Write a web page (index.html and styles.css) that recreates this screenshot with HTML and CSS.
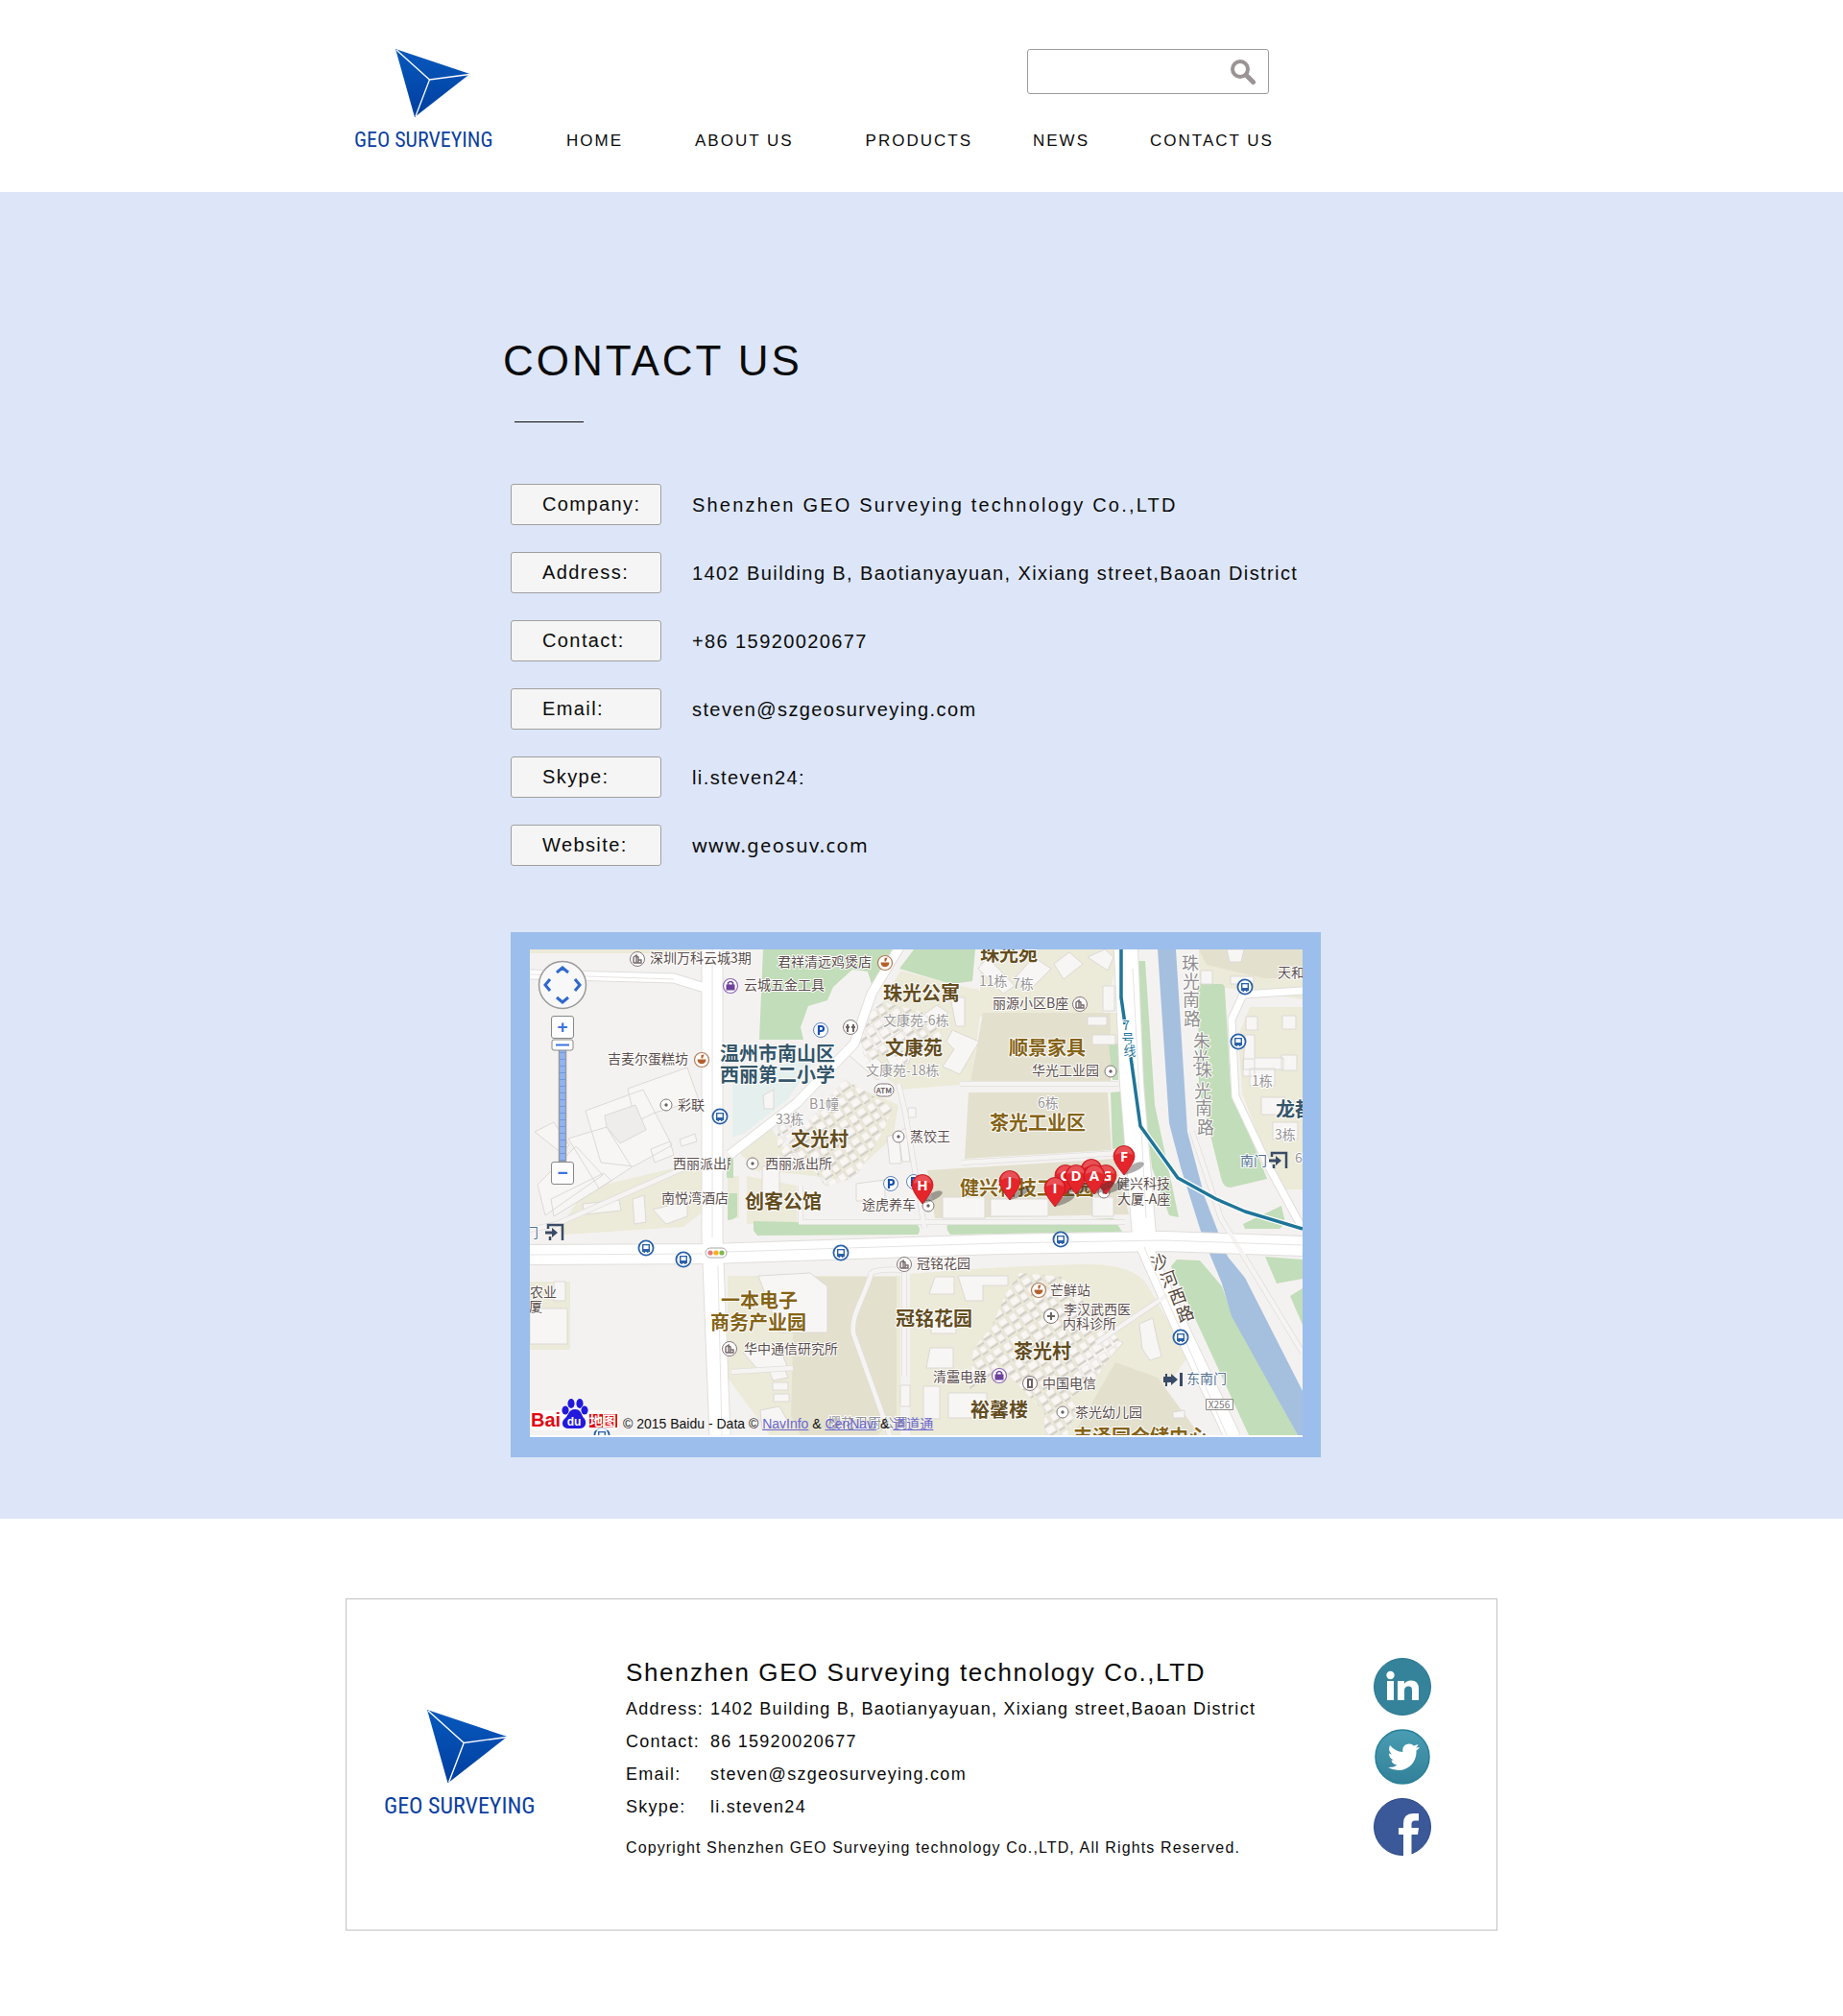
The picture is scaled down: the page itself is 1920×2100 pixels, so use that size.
FILE: index.html
```html
<!DOCTYPE html>
<html lang="en">
<head>
<meta charset="utf-8">
<meta name="viewport" content="width=device-width, initial-scale=1">
<title>Contact Us - GEO Surveying</title>
<link rel="stylesheet" href="styles.css">
</head>
<body>
<header class="site-header">
  <div class="container header-inner">
    <a class="brand" href="#">
      <svg class="brand-mark" viewBox="0 0 78 71" aria-hidden="true">
        <defs><linearGradient id="blue" x1="0" y1="0" x2="0" y2="1"><stop offset="0" stop-color="#0858bd"/><stop offset="1" stop-color="#003f9f"/></linearGradient></defs>
        <path fill="url(#blue)" d="M0 0 77.500 26 20 71z"/>
        <path fill="none" stroke="#fff" stroke-width="1.300" d="M1 1 35.500 32 77 26.500M35.500 32 21 70"/>
      </svg>
      <span class="brand-name">GEO SURVEYING</span>
    </a>
    <div class="header-main">
      <form class="search" role="search">
        <input class="search-input" type="search" aria-label="Search">
        <button class="search-button" type="button" aria-label="Search">
          <svg viewBox="0 0 28 28" width="28" height="28" aria-hidden="true"><circle cx="11" cy="11" r="8" fill="none" stroke="#9b9495" stroke-width="4"/><path d="m17.500 17.500 7 7" stroke="#9b9495" stroke-width="5" stroke-linecap="round"/></svg>
        </button>
      </form>
      <nav aria-label="Main">
        <ul class="nav-list">
          <li><a href="#">HOME</a></li>
          <li><a href="#">ABOUT US</a></li>
          <li><a href="#">PRODUCTS</a></li>
          <li><a href="#">NEWS</a></li>
          <li><a href="#">CONTACT US</a></li>
        </ul>
      </nav>
    </div>
  </div>
</header>

<main class="contact">
  <div class="container contact-inner">
    <h1 class="title">CONTACT US</h1>
    <hr class="rule">
    <dl class="details">
      <div class="row"><dt>Company:</dt><dd class="wide">Shenzhen GEO Surveying technology Co.,LTD</dd></div>
      <div class="row"><dt>Address:</dt><dd>1402 Building B, Baotianyayuan, Xixiang street,Baoan District</dd></div>
      <div class="row"><dt>Contact:</dt><dd>+86 15920020677</dd></div>
      <div class="row"><dt>Email:</dt><dd><a href="#">steven@szgeosurveying.com</a></dd></div>
      <div class="row"><dt>Skype:</dt><dd>li.steven24:</dd></div>
      <div class="row"><dt>Website:</dt><dd class="site"><a href="#">www.geosuv.com</a></dd></div>
    </dl>

    <div class="map-frame">
      <div class="map">
        <svg class="map-canvas" viewBox="0 0 805 508" role="img" aria-label="Map of the office area">
          <defs>
            <symbol id="bus" viewBox="0 0 18 18"><circle cx="9" cy="9" r="7.600" fill="#fff" stroke="#2c61a8" stroke-width="1.800"/><path fill="#2c61a8" d="M5 5h8v8h-1.500v1H10v-1H8v1H6.500v-1H5z"/><path fill="#fff" d="M6.400 6.300h5.200V10H6.400z"/></symbol>
            <symbol id="dot" viewBox="0 0 18 18"><circle cx="9" cy="9" r="6" fill="#fff" stroke="#82777a"/><circle cx="9" cy="9" r="1.700" fill="#6d6262"/></symbol>
            <symbol id="food" viewBox="0 0 18 18"><circle cx="9" cy="9" r="7.500" fill="#fff" stroke="#b07b58" stroke-width="1.200"/><path fill="#b3612c" d="M4.500 8.500h9c0 3-2 4.800-4.500 4.800S4.500 11.500 4.500 8.500zM8.500 4l3-.5-1.500 4H8.500z"/></symbol>
            <symbol id="shop" viewBox="0 0 18 18"><circle cx="9" cy="9" r="7.500" fill="#fff" stroke="#8c68b5" stroke-width="1.200"/><path fill="#6d419c" d="M4.500 7.500h9v6h-9z"/><path fill="none" stroke="#6d419c" stroke-width="1.500" d="M6.500 8V5.800q2.500-2.600 5 0V8"/></symbol>
            <symbol id="tower" viewBox="0 0 18 18"><circle cx="9" cy="9" r="7.500" fill="#fff" stroke="#85777a"/><path fill="none" stroke="#75686a" stroke-width="1.400" d="M5 13V7l3-2v8m0-7 2 1v6m-5 0h8v-3h-3"/></symbol>
            <symbol id="park" viewBox="0 0 18 18"><circle cx="9" cy="9" r="7.500" fill="#fff" stroke="#5c83bb"/><path fill="none" stroke="#174fae" stroke-width="2.200" d="M7 14V5h2.500a2.400 2.400 0 0 1 0 5H7"/></symbol>
            <symbol id="pin" viewBox="0 0 36 36"><path fill="#333" opacity=".4" d="m12 32 9-11q9-5 12-1-2 7-21 12z"/><path fill="#e4252b" stroke="#bd1217" stroke-width=".8" d="M12 32Q1 19 1 12.500a11 11 0 0 1 22 0Q23 19 12 32z"/><path fill="#fff" opacity=".2" d="M3 11a9 9 0 0 1 18 0q-9-5-18 0z"/></symbol>
            <symbol id="gate" viewBox="0 0 20 20"><path fill="none" stroke="#394b66" stroke-width="2.500" d="M3 6V2h15v16M5 14v4"/><path fill="#394b66" d="M0 8.500h7V5l6 5-6 5v-3.500H0z"/></symbol>
            <pattern id="village" width="22" height="22" patternUnits="userSpaceOnUse" patternTransform="rotate(-34)"><path fill="#d2cec7" d="M1 3h8v8H1zm10-1h9v7h-9zM1 14h7v7H1zm10-3h10v9H11z"/><path fill="#f9f6f3" stroke="#d5d1cb" stroke-width=".6" d="M1 1h8v8H1zm10-1h9v7h-9zM1 12h7v7H1zm10-2h10v8H11z"/></pattern>
            <clipPath id="cut"><path d="M140 210h69v30h-69z"/></clipPath>
            <clipPath id="sheet"><path d="M0 0h805v506H0z"/></clipPath>
          </defs>
          <path fill="#fff" d="M0 0h805v508H0z"/>
          <g clip-path="url(#sheet)">
          <path fill="#f4f2f0" d="M0 0h805v508H0z"/>

          <!-- land use -->
          <g fill="#ecead8">
            <path d="M0 0h180v4H0zM30 292l28-42 124-30v52l-22 17-125 8zM0 346h42v71H0zM386 22l52 14 30 6 2 18-10 80-74 6-48-40zM262 215l70-75 52 22-6 34-48 44-70-8zM470 0h146l-20 70H468zM603 66h12v35h-12z"/>
            <path d="M697 0h108v52l-80-12-28-4zM750 60h55v190h-25l-38-100-4-60zM396 338q90-8 180-10 60-2 72 30l38 66-60 82H396zM206 340h180v166H250l-44-60zM226 236l52 10v40h-52zM206 236h12v44h-12zM212 205l40-18 16 25-30 20z"/>
          </g>
          <g fill="#e3e0ce">
            <path d="M472 66h133v73H459zM457 149h145l4 60-153 9zM414 230l196-12 14 58-202 4zM276 341h106v143l-20 22h-80l-10-20zM610 430l44 16 44 60H566zM697 0h108v30h-40l-60-14z"/>
          </g>
          <path fill="#e5f0ee" d="m211 136 90-28-32 48-46 36-12 4z"/>
          <g fill="#c2ddb9">
            <path d="M243 0h137l-22 43-6-20-16-2-20 18-6 14-20 6-8 22 3 13h-46zM400 0h64l-3 33-22 3-54-16zM233 283l171 4q4 5 0 10l-167 1-4-5zM435 287l173-7 9 14-179 3q-5-5-3-10zM205 216h7v22h-7zM206 254h10v24q-4 4-10 4zM603 98h10v38h-6zM605 149l11-1 4 58-13 2z"/>
            <path d="M629 12h12l10 150 25 117-10-2-18-50-8-70zM696 40q0-4 4-4h20q4 0 4 5l6 102 38 96-38 9q-8 0-10-10L697 145zM668 330l6-7 24 1 23 27 10 28 69 127h-51zM743 286l40-19 4 18-6 6h-36zM766 320l39 3v20l-27 5zM792 361l13-8v38z"/>
          </g>
          <path fill="#a5bfdf" d="M654 0h19l12 190 18 68 24 62 18 22 60 118v46h-5l-69-124-10-34-20-48-23-73-12-46z"/>

          <!-- buildings -->
          <g fill="#f8f6f4" stroke="#dcd9d5">
            <path d="m102 145 62-22 12 34-46 13-20 10zM58 168l60-22 30 58-40 22-34-4zM40 197l40-12 26 42-34 22zM8 245l40-40 28 30-60 42zM5 190l20-10 16 24-8 8zM22 260l55-27 8 8-60 37zM126 208l20-8 4 14-20 8zM156 198l16-6 2 8-16 5zM55 265l38-4 2 11-38 4zM107 260l12-4 2 28-12 2zM128 271l36-9v16l-22 8zM25 346h12v20H25zM0 374h39v37H0z"/>
            <path fill="#efedeb" d="m78 173 32-11 11 26-27 14-14-17z"/>
            <path d="m365 100 24-16 14 12-8 22-18 6zM440 84l28 12-20 34-18-8 12-18-8-8zM345 84l22-14 20 16-28 22zM410 68l14-10 12 8-12 10zM438 50h15v30h-9zM243 152l11-6v20h-10zM242 226h18v40h-18zM340 244l30-4v22h-30zM265 214l16-4v10h-16zM372 195l12-4 3 32h-12zM384 190l8-4 4 35h-8zM394 165h8v10h-8zM330 108l14-12 30 30-12 10zM581 70h20v9h-20zM586 89h24v10h-24z"/>
            <path d="M430 258h44v22h-44zM480 260h60v18h-60zM586 258h22v20h-22zM422 341h20v18h-26zM446 340h52v10h-26v16h-18zM418 386h26v14h-26zM417 415h24v21h-28zM410 455h17v34h-17zM436 462h40v26h-40zM386 454h10v22h-10zM238 340l54-3 18 14v48h-50zM222 420l38-6 8 20-30 4zM250 440l15-4 4 10-16 3zM253 451h16v8h-16zM254 463h16v8h-16zM240 480l20-4 10 18-28 6zM635 390l14-6 4 20 5 20-12 4-8-12zM570 426l30-26 18 10-28 30-18 8zM670 482l12-2v8h-12z"/>
            <path d="M746 70h12v14h-12zm38-1h14v14h-14zM743 114h12v18h-12zM783 110h16v16h-16zM745 89h10v24h30v12h-42zM750 124h26v18h-26zM762 154h24v18h-24zM774 180h26v18h-26zM699 22h12v14h-12zM726 0h18l-3 13h-12zM730 28h24v8h-24zM581 8l18-8 9 8-6 14zM597 38h12v26h-12zM467 20l26 26 12-8-28-30zM505 30l20-22 18 12-18 18zM546 15l16-12 14 12-20 16z"/>
          </g>
          <path fill="url(#village)" d="m258 215 70-80 50 30-10 24-28 48-32 10-14-20-30 2zM340 75l28-20 40 10 22 24-40 30-18-10-22 10zM258 180l20-12 4 16-24 24zM480 395l16-36 14-22 44 4 62 68-24 34-50 45-48-50-36 22 4-44zM536 478l20-20 14 20-10 28h-24z"/>

          <!-- roads -->
          <g fill="none" stroke="#e0dedb" stroke-linejoin="round">
            <path stroke-width="11" d="m0 26 150 4 32 10"/><path stroke-width="11" d="m386-4-30 50-18 52-60 62-70 54"/><path stroke-width="23" d="M190 0v300l8 206"/><path stroke-width="22" d="m0 318 190-1 300-10 170-3 145 5"/><path stroke-width="26" d="m621 0 6 140 14 170"/><path stroke-width="18" d="m636 300 40 90 56 118"/><path stroke-width="9" d="m805 43-62 4-12 26 4 80 34 72 36 66"/><path stroke-width="6" d="m0 292 28-6 150-66M384 140l7 30 16 95 4 25M280 284h340M282 246v38M393 334q-40-2-38 6c-10 30-20 40-18 60l38 106M390 335v110M448 140h165M450 222l165-10M590 410l44-30 30-20M210 440l64-4M690 190l30 90 85 140"/>
          </g>
          <g fill="none" stroke="#fff" stroke-linejoin="round">
            <path stroke-width="9" d="m0 26 150 4 32 10"/><path stroke-width="9" d="m386-4-30 50-18 52-60 62-70 54"/><path stroke-width="21" d="M190 0v300l8 206"/><path stroke-width="20" d="m0 318 190-1 300-10 170-3 145 5"/><path stroke-width="24" d="m621 0 6 140 14 170"/><path stroke-width="16" d="m636 300 40 90 56 118"/><path stroke-width="7" d="m805 43-62 4-12 26 4 80 34 72 36 66"/>
            <path stroke="#f6f4f3" stroke-width="4.500" d="m0 292 28-6 150-66M384 140l7 30 16 95 4 25M280 284h340M282 246v38M393 334q-40-2-38 6c-10 30-20 40-18 60l38 106M390 335v110M448 140h165M450 222l165-10M590 410l44-30 30-20M210 440l64-4M690 190l30 90 85 140"/>
            <path stroke="#e6e4e2" d="m0 318 180-1m25-2 285-9 170-3 145 5M190 0v300m6 30 4 176M0 26l150 5M628 20l14 260m-2 30 86 196"/>
            <path stroke="#fff" stroke-width="6" d="M616 0v50l4 28m6 34 10 72 39 54 40 22 30 13 60 18"/>
            <path stroke="#1f7598" stroke-width="3.500" d="M616 0v50l4 28m6 34 10 72 39 54 40 22 30 13 60 18"/>
          </g>

          <!-- places -->
          <g class="poi">
            <text x="125" y="14">深圳万科云城3期</text><text x="223" y="42">云城五金工具</text><text x="81" y="119">吉麦尔蛋糕坊</text><text x="154" y="167">彩联</text><text x="149" y="228" clip-path="url(#cut)">西丽派出所</text><text x="245" y="228">西丽派出所</text><text x="137" y="264">南悦湾酒店</text><text x="258" y="18">君祥清远鸡煲店</text><text x="396" y="200">蒸饺王</text><text x="482" y="61">丽源小区B座</text><text x="523" y="131">华光工业园</text><text x="346" y="271">途虎养车</text><text x="403" y="332">冠铭花园</text><text x="223" y="421">华中通信研究所</text><text x="420" y="450">清靁电器</text><text x="542" y="360">芒鲜站</text><text x="556" y="380">李汉武西医</text><text x="555" y="395">内科诊所</text><text x="534" y="457">中国电信</text><text x="568" y="487">茶光幼儿园</text><text x="779" y="29">天和</text><text x="611" y="249">健兴科技</text><text x="612" y="265">大厦-A座</text><text x="0" y="362">农业</text><text x="-1" y="377">厦</text>
          </g>
          <g class="block">
            <text x="368" y="79">文康苑-6栋</text><text x="350" y="131">文康苑-18栋</text><text x="291" y="166">B1幢</text><text x="256" y="182">33栋</text><text x="468" y="38">11栋</text><text x="503" y="41">7栋</text><text x="529" y="165">6栋</text><text x="752" y="142">1栋</text><text x="776" y="198">3栋</text><text x="797" y="222">63</text><text x="310" y="498">樱花卫厨公司</text>
          </g>
          <g class="gate"><text x="740" y="225">南门</text><text x="684" y="452">东南门</text><text x="-5" y="300">门</text></g>
          <g class="area">
            <text x="368" y="53">珠光公寓</text><text x="370" y="110">文康苑</text><text x="272" y="205">文光村</text><text x="224" y="270">创客公馆</text><text x="469" y="12">珠光苑</text><text x="381" y="392">冠铭花园</text><text x="504" y="426">茶光村</text><text x="459" y="487">裕馨楼</text>
          </g>
          <g class="area estate"><text x="499" y="110">顺景家具</text><text x="479" y="188">茶光工业区</text><text x="448" y="256">健兴科技工业园</text><text x="199" y="373">一本电子</text><text x="188" y="396">商务产业园</text><text x="566" y="515">丰泽园仓储中心</text></g>
          <g class="area school"><text x="198" y="116">温州市南山区</text><text x="198" y="138">西丽第二小学</text><text x="777" y="174">龙都</text></g>
          <g class="street">
            <text x="688" y="21">珠</text><text x="689" y="40">光</text><text x="689" y="59">南</text><text x="690" y="79">路</text><text x="700" y="102">朱</text><text x="699" y="120">光</text><text x="702" y="132">珠</text><text x="701" y="154">光</text><text x="702" y="172">南</text><text x="704" y="192">路</text>
          </g>
          <g class="street avenue">
            <text x="656" y="332" transform="rotate(-20 656 326)">沙</text><text x="666" y="350" transform="rotate(-20 666 344)">河</text><text x="675" y="368" transform="rotate(-20 675 362)">西</text><text x="683" y="386" transform="rotate(-20 683 380)">路</text>
          </g>
          <g class="metro"><text x="621" y="84">7</text><text x="623" y="97">号</text><text x="625" y="110">线</text></g>
          <path fill="#fff" stroke="#8d8888" d="M704.500 468.500h28v11h-28z"/><text class="route" x="718" y="478">X256</text>

          <!-- markers -->
          <g>
            <use href="#tower" x="103" y="1" width="18" height="18"/><use href="#shop" x="200" y="29" width="18" height="18"/><use href="#food" x="170" y="106" width="18" height="18"/><use href="#dot" x="133" y="153" width="18" height="18"/><use href="#dot" x="223" y="214" width="18" height="18"/><use href="#food" x="361" y="5" width="18" height="18"/><use href="#park" x="294" y="75" width="18" height="18"/><use href="#dot" x="375" y="186" width="18" height="18"/><use href="#park" x="367" y="235" width="18" height="18"/><use href="#park" x="391" y="233" width="18" height="18"/><use href="#tower" x="564" y="48" width="18" height="18"/><use href="#dot" x="596" y="118" width="18" height="18"/><use href="#dot" x="406" y="258" width="18" height="18"/><use href="#tower" x="381" y="319" width="18" height="18"/><use href="#tower" x="199" y="407" width="18" height="18"/><use href="#shop" x="480" y="435" width="18" height="18"/><use href="#food" x="521" y="346" width="18" height="18"/><use href="#dot" x="546" y="473" width="18" height="18"/><use href="#dot" x="589" y="244" width="18" height="18"/>
            <g fill="#fff" stroke="#85777a"><circle cx="334" cy="81" r="7.500"/><circle cx="543" cy="382" r="7.500"/><circle cx="521" cy="452" r="7.500"/><rect x="359" y="140" width="20" height="13" rx="6.500"/></g>
            <path fill="none" stroke="#6d6262" stroke-width="2" d="M543 378v8m-4-4h8M331 78v8m6-8v8m-8-5h4m2 0h4M519 448h4v8h-4z"/>
            <text class="atm" x="369" y="150">ATM</text>
            <use href="#bus" x="189" y="165" width="18" height="18"/><use href="#bus" x="112" y="302" width="18" height="18"/><use href="#bus" x="151" y="314" width="18" height="18"/><use href="#bus" x="315" y="307" width="18" height="18"/><use href="#bus" x="544" y="293" width="18" height="18"/><use href="#bus" x="669" y="395" width="18" height="18"/><use href="#bus" x="736" y="30" width="18" height="18"/><use href="#bus" x="729" y="87" width="18" height="18"/><use href="#bus" x="66" y="497" width="18" height="18"/>
            <use href="#gate" x="16" y="285" width="20" height="20"/><use href="#gate" x="770" y="210" width="20" height="20"/>
            <path fill="#394b66" d="M660 445h8v-3l7 6-7 6v-3h-8zM662 442h2v13h-2zM677 441h3v14h-3z"/>
            <rect x="183" y="311" width="22" height="10" rx="5" fill="#fff" stroke="#aaa"/><circle cx="188" cy="316" r="2.600" fill="#e9777c"/><circle cx="194" cy="316" r="2.600" fill="#f5b11c"/><circle cx="200" cy="316" r="2.600" fill="#83b64e"/>
          </g>
          <g class="pins">
            <use href="#pin" x="397" y="233" width="36" height="36"/><text x="409" y="251">H</text>
            <use href="#pin" x="488" y="229" width="36" height="36"/><text x="500" y="247">J</text>
            <use href="#pin" x="573" y="217" width="36" height="36"/>
            <use href="#pin" x="546" y="223" width="36" height="36"/><text x="557" y="241">C</text>
            <use href="#pin" x="588" y="223" width="36" height="36"/><text x="601" y="241">G</text>
            <use href="#pin" x="557" y="223" width="36" height="36"/><text x="569" y="241">D</text>
            <use href="#pin" x="576" y="223" width="36" height="36"/><text x="588" y="241">A</text>
            <use href="#pin" x="535" y="236" width="36" height="36"/><text x="547" y="254">I</text>
            <use href="#pin" x="607" y="203" width="36" height="36"/><text x="619" y="221">F</text>
          </g>

          <!-- provider logo -->
          <g class="provider">
            <rect x="0" y="480" width="93" height="21" rx="5" fill="#fff" opacity=".75"/>
            <text class="bai" x="1" y="497">Bai</text>
            <g fill="#2319dc" stroke="#fff" stroke-width="1.200" paint-order="stroke"><ellipse cx="37" cy="480" rx="3.600" ry="4.600"/><ellipse cx="43" cy="473" rx="3.600" ry="5"/><ellipse cx="52" cy="473" rx="3.600" ry="5"/><ellipse cx="57" cy="480" rx="3.600" ry="4.600"/><path d="M47 479c7 0 6 6 10 10 3 5 0 10-5 10H40c-6 0-8-6-4-10 5-4 4-10 11-10z"/></g>
            <text class="du" x="46" y="496">du</text>
            <path fill="#e10a12" d="M62 484h14v14H62zM77 484h14v14H77z"/>
            <text class="ditu" x="62" y="496">地图</text>
          </g>
          </g>
        </svg>
        <div class="map-controls">
          <svg width="52" height="52" viewBox="0 0 52 52" aria-hidden="true"><circle cx="26" cy="26" r="24.500" fill="#f8f8f8" stroke="#9a9a9a" stroke-width="1.500"/><path fill="none" stroke="#2f68cf" stroke-width="3" d="m20 13 6-5 6 5M20 39l6 5 6-5M13 20l-5 6 5 6M39 20l5 6-5 6"/></svg>
          <button class="zoom" type="button" aria-label="Zoom in">+</button>
          <svg width="24" height="128" viewBox="0 0 24 128" aria-hidden="true"><path fill="#8fb4f3" stroke="#9a9a9a" stroke-width="1.500" d="M8.500 8h7v120h-7z"/><path stroke="#6f98e2" stroke-width="6" stroke-dasharray="1 6" fill="none" d="M12 14v114"/><rect x="1" y="1" width="22" height="11" rx="2" fill="#fff" stroke="#888"/><path stroke="#3a74e0" stroke-width="2" d="M5 6.500h14"/></svg>
          <button class="zoom" type="button" aria-label="Zoom out">−</button>
        </div>
        <p class="map-credit">© 2015 Baidu - Data © <a href="#">NavInfo</a> &amp; <a href="#">CenNavi</a> &amp; <a href="#">道道通</a></p>
      </div>
    </div>
  </div>
</main>

<footer class="site-footer">
  <div class="container footer-box">
    <a class="brand brand-large" href="#">
      <svg class="brand-mark" viewBox="0 0 78 71" aria-hidden="true">
        <path fill="url(#blue)" d="M0 0 77.500 26 20 71z"/>
        <path fill="none" stroke="#fff" stroke-width="1.300" d="M1 1 35.500 32 77 26.500M35.500 32 21 70"/>
      </svg>
      <span class="brand-name">GEO SURVEYING</span>
    </a>
    <div class="footer-info">
      <h2 class="footer-title">Shenzhen GEO Surveying technology Co.,LTD</h2>
      <dl class="footer-list">
        <dt>Address:</dt><dd>1402 Building B, Baotianyayuan, Xixiang street,Baoan District</dd>
        <dt>Contact:</dt><dd>86 15920020677</dd>
        <dt>Email:</dt><dd><a href="#">steven@szgeosurveying.com</a></dd>
        <dt>Skype:</dt><dd>li.steven24</dd>
      </dl>
      <p class="copyright">Copyright Shenzhen GEO Surveying technology Co.,LTD, All Rights Reserved.</p>
    </div>
    <div class="social">
      <a href="#" aria-label="LinkedIn"><svg width="60" height="60" viewBox="0 0 60 60"><defs><linearGradient id="teal" x1="0" y1="0" x2="0" y2="1"><stop offset="0" stop-color="#4a9db3"/><stop offset="1" stop-color="#328099"/></linearGradient></defs><circle cx="30" cy="30" r="29.500" fill="#35839b" stroke="#2a7690"/><circle cx="17.500" cy="18" r="4.200" fill="#fff"/><path fill="#fff" d="M14 24h7v20h-7zM25 24h7v3q2-3.500 7-3.500 8 0 8 9V44h-7V33.500q0-4-3.500-4Q32 29.500 32 34v10h-7z"/></svg></a>
      <a href="#" aria-label="Twitter"><svg width="58" height="58" viewBox="0 0 58 58"><circle cx="29" cy="29" r="28" fill="url(#teal)" stroke="#267f98" stroke-width="1.500"/><path fill="#fff" d="M47 19q-1.500 2-3.500 3.500C44 35 35 43 25 43q-6 0-11-3 6 .5 9.500-2.500-5-.5-6-5h2.500q-5-2-5-7l3 1q-4.500-4-2-9.500 5.500 6.500 13.500 7c-1-5 2-8.500 6.500-8.500q3 0 5 2l4.500-1.500q-.5 2-2.500 3.500z"/></svg></a>
      <a href="#" aria-label="Facebook"><svg width="60" height="60" viewBox="0 0 60 60"><circle cx="30" cy="30" r="29.500" fill="#3b5998" stroke="#2d4888"/><path fill="#fff" d="M31 60V38h-5v-7h5v-4.500Q31 16 41 16h6v7.500h-4q-3.500 0-3.500 3.500v4H47l-1 7h-6.500v22z"/></svg></a>
    </div>
  </div>
</footer>
</body>
</html>
```
FILE: styles.css
```css
* {
  box-sizing: border-box;
}

body {
  margin: 0;
  background: #fff;
  color: #0b0b0b;
  font-family: "Liberation Sans", Arial, sans-serif;
}

a {
  color: inherit;
  text-decoration: none;
}

dl, dd, p, h1, h2, ul {
  margin: 0;
  padding: 0;
}

.container {
  width: 100%;
  max-width: 1200px;
  margin: 0 auto;
}

/* Header */
.site-header {
  min-height: 200px;
  padding-top: 51px;
}

.header-inner {
  display: flex;
  gap: 78px;
  padding-left: 9px;
}

.brand {
  display: flex;
  flex-direction: column;
  flex: none;
  width: 143px;
  gap: 10px;
  color: #0b3fa0;
}

.brand-mark {
  width: 78px;
  margin-left: 43px;
}

.brand-name {
  font-family: "Roboto Condensed", "Liberation Sans Narrow", sans-serif;
  font-size: 22px;
  line-height: 28px;
  text-align: center;
  white-space: nowrap;
}

.header-main {
  display: flex;
  flex-direction: column;
  gap: 39px;
}

.search {
  display: flex;
  align-items: center;
  align-self: flex-end;
  width: 252px;
  height: 47px;
  margin-right: 5px;
  padding-right: 12px;
  border: 1px solid #9d9b9b;
  border-radius: 3px;
}

.search-input {
  flex: 1;
  min-width: 0;
  height: 40px;
  padding: 0 12px;
  border: 0;
  outline: 0;
  background: none;
  font: inherit;
}

.search-button {
  height: 28px;
  padding: 0;
  border: 0;
  background: none;
}

.nav-list {
  display: flex;
  gap: 63px;
  list-style: none;
  font-size: 17px;
  line-height: 20px;
  letter-spacing: 2px;
  white-space: nowrap;
}

.nav-list li:nth-child(-n+2) {
  margin-right: 12px;
}

/* Contact section */
.contact {
  padding: 152px 0 64px;
  background: #dde6f8;
}

.contact-inner {
  padding-left: 164px;
}

.title {
  font-size: 44px;
  font-weight: 400;
  line-height: 48px;
  letter-spacing: 3px;
}

.rule {
  width: 72px;
  height: 1px;
  margin: 39px 0 64px 12px;
  border: 0;
  background: #0b0b0b;
}

.details {
  display: flex;
  flex-direction: column;
  gap: 28px;
  margin-left: 8px;
  font-size: 20px;
  line-height: 24px;
  letter-spacing: 0.07em;
}

.row {
  display: flex;
  align-items: center;
  gap: 32px;
}

.row dt {
  width: 157px;
  height: 43px;
  padding: 8px 0 0 32px;
  border: 1px solid #a09f9f;
  border-radius: 3px;
  background: #f5f5f5;
}

.wide {
  letter-spacing: 0.11em;
}

.site {
  font-family: "Noto Sans", sans-serif;
}

.map-frame {
  max-width: 844px;
  margin: 69px 0 0 8px;
  padding: 18px 19px 21px 20px;
  background: #9bbeec;
}

.map {
  position: relative;
}

.map-canvas {
  display: block;
  width: 100%;
  font-family: "Noto Sans CJK SC", sans-serif;
}

.map-canvas text {
  paint-order: stroke;
  stroke: #fff;
  stroke-width: 2px;
  stroke-linejoin: round;
}

.poi {
  font-size: 14px;
  fill: #5a4d4b;
}

.block {
  font-size: 14px;
  fill: #969494;
}

.gate {
  font-size: 14px;
  fill: #53708f;
}

.area {
  font-size: 20px;
  font-weight: 700;
  fill: #634d1e;
}

.estate {
  fill: #856316;
}

.school {
  fill: #35566a;
}

.street {
  font-size: 18px;
  text-anchor: middle;
  fill: #8f8d8d;
}

.avenue {
  fill: #54463c;
}

.metro {
  font-size: 13px;
  text-anchor: middle;
  fill: #1f7598;
}

.route {
  font-size: 10px;
  text-anchor: middle;
  fill: #777;
}

.atm {
  font-size: 8px;
  font-weight: 700;
  text-anchor: middle;
  fill: #6d6262;
}

.pins text {
  font-family: "Open Sans", sans-serif;
  font-size: 15px;
  font-weight: 700;
  text-anchor: middle;
  fill: #fff;
  stroke: none;
}

.provider text {
  font-family: "Liberation Sans", "Noto Sans CJK SC", sans-serif;
  font-weight: 700;
}

.provider .bai {
  font-size: 20px;
  fill: #e10a12;
}

.provider .du {
  font-size: 12px;
  text-anchor: middle;
  fill: #fff;
  stroke: none;
}

.provider .ditu {
  font-size: 14px;
  fill: #fff;
  stroke: none;
}

.map-controls {
  position: absolute;
  top: 11px;
  left: 8px;
  display: flex;
  flex-direction: column;
  align-items: center;
}

.map-controls svg {
  display: block;
}

.zoom {
  width: 24px;
  height: 24px;
  padding: 0;
  border: 1px solid #888;
  border-radius: 3px;
  background: #fdfdfd;
  color: #3a74e0;
  font: 700 19px/20px "Liberation Sans", sans-serif;
}

.map-controls svg:first-child {
  margin-bottom: 6px;
}

.map-credit {
  position: absolute;
  bottom: 6px;
  left: 97px;
  color: #111;
  font-family: "Liberation Sans", "Noto Sans CJK SC", sans-serif;
  font-size: 14px;
  line-height: 16px;
  white-space: nowrap;
}

.map-credit a {
  color: #6a66cf;
  text-decoration: underline;
}

/* Footer */
.site-footer {
  padding: 83px 0 90px;
}

.footer-box {
  display: flex;
  min-height: 346px;
  padding: 61px 68px 60px 39px;
  border: 1px solid #c3c3c3;
}

.brand-large {
  width: 154px;
  margin-top: 54px;
}

.brand-large .brand-mark {
  width: 84px;
  margin-left: 45px;
}

.brand-large .brand-name {
  font-size: 24px;
}

.footer-info {
  margin-left: 98px;
}

.footer-title {
  font-size: 26px;
  font-weight: 400;
  line-height: 30px;
  letter-spacing: 0.06em;
}

.footer-list {
  display: grid;
  grid-template-columns: 88px 1fr;
  margin-top: 6px;
  font-size: 18px;
  line-height: 34px;
  letter-spacing: 0.07em;
  white-space: nowrap;
}

.copyright {
  margin-top: 16px;
  font-size: 16px;
  line-height: 20px;
  letter-spacing: 0.07em;
}

.social {
  display: flex;
  flex-direction: column;
  align-items: center;
  gap: 14px;
  margin-left: auto;
}

.social svg {
  display: block;
}
```
